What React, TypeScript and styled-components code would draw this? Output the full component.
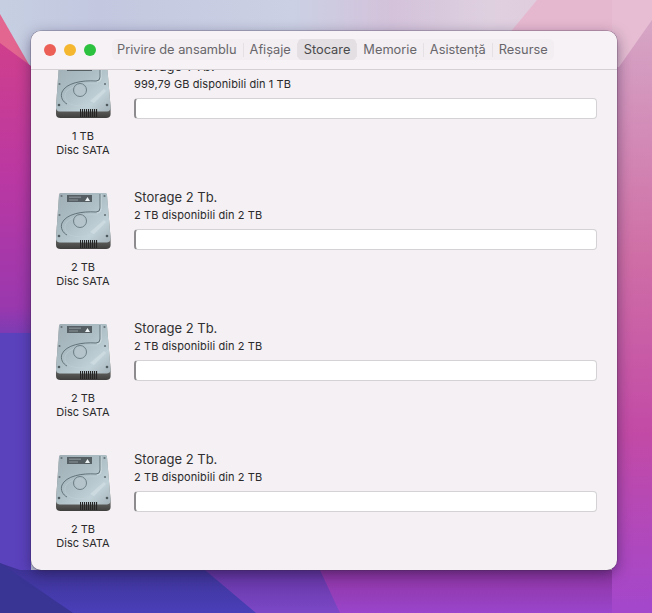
import React from "react";
import styled, { createGlobalStyle } from "styled-components";

const Global = createGlobalStyle`
  html, body { margin: 0; padding: 0; width: 652px; height: 613px; overflow: hidden; }
  body { font-family: Inter, "Liberation Sans", sans-serif; -webkit-font-smoothing: antialiased; }
`;

const Desktop = styled.div`
  position: relative;
  width: 652px;
  height: 613px;
  overflow: hidden;
  padding: 31px 35px 43px 31px;
  box-sizing: border-box;
  display: flex;
`;

const Wallpaper = styled.svg`
  position: absolute;
  inset: 0;
  width: 652px;
  height: 613px;
`;

const Window = styled.div`
  position: relative;
  flex: 1;
  display: flex;
  flex-direction: column;
  background: #f4f0f3;
  border-radius: 10px;
  overflow: hidden;
  box-shadow: 0 0 0 0.5px rgba(60, 40, 70, 0.45), 0 4px 14px rgba(30, 20, 60, 0.5);
`;

const Toolbar = styled.header`
  flex: none;
  padding: 0 0 1px 13px;
  height: 37px;
  display: flex;
  align-items: center;
  background: #f7f2f6;
  border-bottom: 1px solid #d4d0d4;
  position: relative;
  z-index: 1;
`;

const Lights = styled.div`
  display: flex;
  gap: 8px;
  margin-right: 16px;
`;

const Light = styled.span<{ $color: string }>`
  width: 12px;
  height: 12px;
  border-radius: 50%;
  background: ${(p) => p.$color};
`;

const Tabs = styled.nav`
  display: flex;
  align-items: center;
  height: 21px;
  background: #f2eef2;
  border-radius: 5px;
`;

const Tab = styled.span<{ $active?: boolean }>`
  height: 21px;
  line-height: 21px;
  padding: 0 6px;
  font-size: 12.8px;
  color: ${(p) => (p.$active ? "#4a4a4c" : "#68666a")};
  background: ${(p) => (p.$active ? "#e3dfe2" : "transparent")};
  border-radius: 4px;
  white-space: nowrap;
  &:first-child { padding-left: 5px; }
`;

const TabGap = styled.i`
  width: 1px;
  height: 14px;
  background: #e4e0e4;
`;

const Viewport = styled.main`
  flex: 1;
  overflow: hidden;
  min-height: 0;
`;

const List = styled.div`
  margin-top: -9px;
  padding: 0 20px 0 13px;
`;

const Row = styled.section`
  height: 131px;
  display: grid;
  grid-template-columns: 78px 1fr;
  column-gap: 12px;
`;

const DiskCol = styled.div`
  display: flex;
  flex-direction: column;
  align-items: center;
`;

const DiskLabel = styled.div`
  margin-top: 8px;
  font-size: 11px;
  line-height: 14px;
  color: #2a2a2c;
  text-align: center;
  white-space: nowrap;
`;

const Info = styled.div`
  margin-top: -3px;
`;

const Title = styled.div`
  font-size: 13px;
  line-height: 16px;
  height: 16px;
  color: #303032;
`;

const Sub = styled.div`
  font-size: 11px;
  line-height: 14px;
  margin-top: 3px;
  letter-spacing: 0.1px;
  color: #2a2a2c;
`;

const Bar = styled.div`
  margin-top: 7px;
  height: 19px;
  background: #fff;
  border: 1px solid #d4d2d4;
  border-left: 2px solid #8d8b8e;
  border-radius: 4px;
`;

const Disk = () => (
  <svg width="58" height="60" viewBox="0 0 58 60" aria-hidden="true">
    <defs>
      <linearGradient id="dBody" x1="0" y1="0" x2="1" y2="1">
        <stop offset="0" stopColor="#a0aeb5" />
        <stop offset="0.45" stopColor="#adbec5" />
        <stop offset="0.75" stopColor="#c0d1d7" />
        <stop offset="1" stopColor="#a4b3b9" />
      </linearGradient>
      <linearGradient id="dFront" x1="0" y1="0" x2="0" y2="1">
        <stop offset="0" stopColor="#a8adab" />
        <stop offset="0.8" stopColor="#6b6b69" />
        <stop offset="1" stopColor="#3f3f3d" />
      </linearGradient>
    </defs>
    <path d="M5 3 Q5.2 1 7 1 H51 Q52.8 1 53 3 L56.6 46 V53 Q56.6 57 52 57 H6.5 Q2 57 2 53 V46 Z" fill="url(#dFront)" />
    <path d="M5 3 Q5.2 1 7 1 H51 Q52.8 1 53 3 L56.6 46 Q56.8 50 53 50.5 H5.5 Q1.8 50 2 46 Z" fill="url(#dBody)" />
    <rect x="13" y="3" width="25" height="7" fill="#555e62" />
    <rect x="15" y="4.5" width="12" height="1.4" fill="#828c91" />
    <rect x="15" y="7.4" width="9" height="1.2" fill="#828c91" />
    <path d="M31 9 L33.5 5 L36 9 Z" fill="#eef3f5" />
    <path d="M46 2 V16 Q46 20 42 20 C28 19 12 22 8 31 C6 36 9 41 13 43" fill="none" stroke="#5a6b72" strokeWidth="0.9" />
    <path d="M47.2 2 V17 Q47 21 43 21.2" fill="none" stroke="#dbe5e8" strokeWidth="0.7" opacity="0.8" />
    <path d="M44 23 C35 22 20 23 13 30 C9 35 11 40 16 43 Q26 47 38 42" fill="none" stroke="#c6d4d9" strokeWidth="0.6" opacity="0.7" />
    <circle cx="26" cy="29" r="6.5" fill="none" stroke="#66767c" strokeWidth="0.9" />
    <circle cx="26" cy="29" r="5" fill="#b4c4ca" />
    <path d="M36 40 L50 28 L52 30 L40 42 Z" fill="#e2ecef" opacity="0.4" />
    <circle cx="7.5" cy="4" r="1.1" fill="#667277" />
    <circle cx="50.5" cy="4" r="1.1" fill="#667277" />
    <circle cx="51" cy="23" r="1.1" fill="#667277" />
    <circle cx="5.5" cy="23" r="1.1" fill="#667277" />
    <circle cx="5" cy="44" r="1.3" fill="#4f5a5e" />
    <circle cx="53" cy="44" r="1.3" fill="#4f5a5e" />
    <g fill="#262626">
      {Array.from({ length: 9 }, (_, i) => (
        <rect key={i} x={26 + i * 2} y={48} width={1.1} height={8} />
      ))}
    </g>
  </svg>
);

const drives = [
  { size: "1 TB", title: "Storage 1 Tb.", free: "999,79 GB disponibili din 1 TB" },
  { size: "2 TB", title: "Storage 2 Tb.", free: "2 TB disponibili din 2 TB" },
  { size: "2 TB", title: "Storage 2 Tb.", free: "2 TB disponibili din 2 TB" },
  { size: "2 TB", title: "Storage 2 Tb.", free: "2 TB disponibili din 2 TB" },
];

const tabs = ["Privire de ansamblu", "Afișaje", "Stocare", "Memorie", "Asistență", "Resurse"];

export default function App() {
  return (
    <>
      <Global />
      <Desktop>
        <Wallpaper viewBox="0 0 652 613" aria-hidden="true">
          <defs>
            <linearGradient id="wSky" x1="0" y1="0" x2="1" y2="0">
              <stop offset="0" stopColor="#c6cfe2" />
              <stop offset="0.15" stopColor="#c3c8e0" />
              <stop offset="0.45" stopColor="#cbd0e4" />
              <stop offset="0.6" stopColor="#d3c2da" />
              <stop offset="0.75" stopColor="#dfd0e0" />
              <stop offset="1" stopColor="#e2c6d8" />
            </linearGradient>
            <linearGradient id="wLeft" x1="0" y1="0" x2="0" y2="1">
              <stop offset="0" stopColor="#cf3f8c" />
              <stop offset="0.45" stopColor="#bb38a2" />
              <stop offset="0.9" stopColor="#9a38ae" />
              <stop offset="1" stopColor="#7a3cb4" />
            </linearGradient>
            <linearGradient id="wRight" x1="0" y1="0" x2="0" y2="1">
              <stop offset="0" stopColor="#d6a6c6" />
              <stop offset="0.4" stopColor="#cf6ea6" />
              <stop offset="0.7" stopColor="#c24aa6" />
              <stop offset="1" stopColor="#a347cc" />
            </linearGradient>
            <linearGradient id="wBlue" x1="0" y1="0" x2="0" y2="1">
              <stop offset="0" stopColor="#3c3292" />
              <stop offset="1" stopColor="#4a3fb8" />
            </linearGradient>
            <linearGradient id="wMid" x1="0" y1="0" x2="0" y2="1">
              <stop offset="0" stopColor="#63349f" />
              <stop offset="1" stopColor="#7c48c8" />
            </linearGradient>
            <linearGradient id="wPink" x1="0" y1="0" x2="0" y2="1">
              <stop offset="0" stopColor="#8d349f" />
              <stop offset="1" stopColor="#9a45cc" />
            </linearGradient>
          </defs>
          <rect width="652" height="613" fill="url(#wSky)" />
          <path d="M508 35 L537 0 H652 V35 Z" fill="#e6b8cf" />
          <path d="M0 14 L31 68 L0 45 Z" fill="#e2668f" />
          <path d="M0 43 L31 66 V336 H0 Z" fill="url(#wLeft)" />
          <path d="M0 333 H31 V572 H0 Z" fill="#5b42bd" />
          <path d="M0 563 L20 570 H320 V613 H0 Z" fill="url(#wBlue)" />
          <path d="M0 563 L73 613 H0 Z" fill="#383595" />
          <path d="M205 570 H322 L345 613 H256 Z" fill="url(#wMid)" />
          <path d="M320 570 H652 V613 H340 Z" fill="url(#wPink)" />
          <path d="M612 20 H652 V613 H612 Z" fill="url(#wRight)" />
          <path d="M612 0 H652 V20 L619 67 H612 Z" fill="#e6bdd2" />
        </Wallpaper>
        <Window>
          <Toolbar>
            <Lights>
              <Light $color="#ec5f57" />
              <Light $color="#f4b72f" />
              <Light $color="#2cc23f" />
            </Lights>
            <Tabs>
              {tabs.map((t, i) => (
                <React.Fragment key={t}>
                  {i > 0 && <TabGap />}
                  <Tab $active={t === "Stocare"}>{t}</Tab>
                </React.Fragment>
              ))}
            </Tabs>
          </Toolbar>
          <Viewport>
            <List>
              {drives.map((d, i) => (
                <Row key={i}>
                  <DiskCol>
                    <Disk />
                    <DiskLabel>
                      {d.size}
                      <br />
                      Disc SATA
                    </DiskLabel>
                  </DiskCol>
                  <Info>
                    <Title>{d.title}</Title>
                    <Sub>{d.free}</Sub>
                    <Bar />
                  </Info>
                </Row>
              ))}
            </List>
          </Viewport>
        </Window>
      </Desktop>
    </>
  );
}
